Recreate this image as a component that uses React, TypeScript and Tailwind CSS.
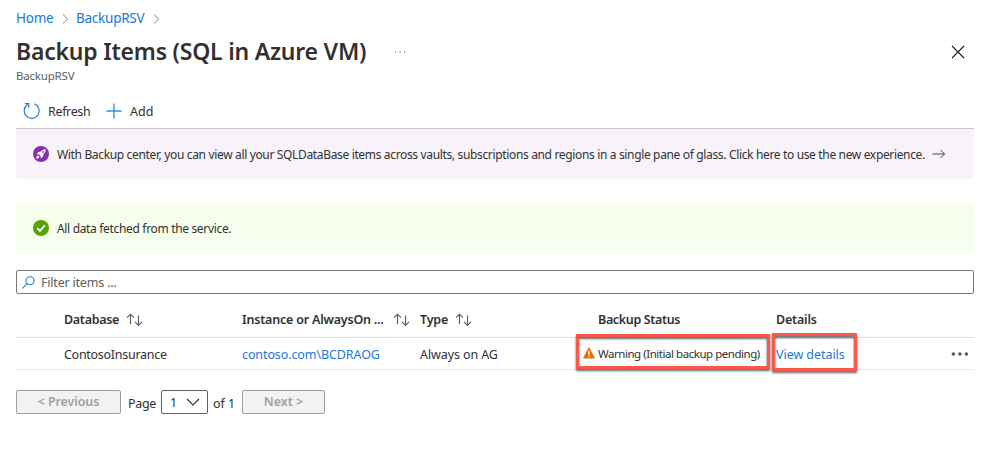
import React from "react";

function SortIcon() {
  return (
    <svg width="18" height="14" viewBox="0 0 18 14" fill="none" stroke="#5b5957" strokeWidth="1.1">
      <path d="M4.5 11V1.2M1 4.7L4.5 1.2L8 4.7" />
      <path d="M12.5 2.5V12.4M9 8.9L12.5 12.4L16 8.9" />
    </svg>
  );
}

function Chevron() {
  return (
    <svg className="mt-px" width="7" height="12" viewBox="0 0 7 12" fill="none" stroke="#8a8886" strokeWidth="1">
      <path d="M1 1.5L5.8 6L1 10.5" />
    </svg>
  );
}

function Toolbar() {
  return (
    <div className="flex h-[45px] items-center border-b border-[#c8c6c4] pt-[10px] text-[12.5px]">
      <svg className="-mt-px ml-[7px]" width="18" height="18" viewBox="0 0 18 18" fill="none" stroke="#2b7cd3" strokeWidth="1.2">
        <path d="M11.4 1.9A7.5 7.5 0 1 1 4.6 2.6M1.8 1.7H5.7V5.6" />
      </svg>
      <span className="ml-[7px] w-[58px] pt-[3px] tracking-[-0.35px]">Refresh</span>
      <svg className="-mt-px" width="16" height="16" viewBox="0 0 16 16" stroke="#2f8fdf" strokeWidth="1.3">
        <path d="M8 .5V15.5M.5 8H15.5" />
      </svg>
      <span className="ml-[8px] pt-[3px]">Add</span>
    </div>
  );
}

function PurpleBanner() {
  return (
    <div className="flex h-[50px] items-center rounded-b-sm bg-[#f8f3fb] pl-[17px] text-[12px]">
      <svg width="16" height="16" viewBox="0 0 16 16">
        <circle cx="8" cy="8" r="8" fill="#892db0" />
        <path fill="#fff" d="M12.6 3.2C10.5 3.1 9 4 7.8 5.6L5.4 5.9 3.5 8.2 5.8 8.3 7.7 10.2 7.8 12.5 10.1 10.6 10.4 8.2C12 6.8 12.8 5.3 12.6 3.2ZM5 9.4L3.3 11.1 3.5 12.7 5 12.5 6.6 11Z" />
        <circle cx="10" cy="6" r=".9" fill="#892db0" />
      </svg>
      <span className="ml-2 w-[875px] whitespace-nowrap pt-[2px] tracking-[-0.345px]">
        With Backup center, you can view all your SQLDataBase items across vaults, subscriptions and regions in a single pane of glass. Click here to use the new experience.
      </span>
      <svg width="14" height="10" viewBox="0 0 14 10" fill="none" stroke="#484644" strokeWidth="1">
        <path d="M.5 5H12.5M8.5 1L12.5 5L8.5 9" />
      </svg>
    </div>
  );
}

function GreenBanner() {
  return (
    <div className="mt-6 flex h-[50px] items-center bg-[#f6ffee] pl-[17px] text-[12px]">
      <svg width="16" height="16" viewBox="0 0 16 16">
        <circle cx="8" cy="8" r="8" fill="#57a300" />
        <path d="M4.2 8.2L7 11L11.8 5.2" fill="none" stroke="#fff" strokeWidth="1.8" />
      </svg>
      <span className="ml-2 pt-[2px] tracking-[-0.33px]">All data fetched from the service.</span>
    </div>
  );
}

function Table() {
  return (
    <div className="text-[12.5px]">
      <div className="flex h-[44px] items-center border-b border-[#e1dfdd] pl-12 pt-[9px] text-[12.5px] font-semibold">
        <div className="flex w-[178px] items-center">
          <span className="w-[62px] tracking-[-0.3px]">Database</span>
          <SortIcon />
        </div>
        <div className="flex w-[178px] items-center">
          <span className="w-[151px] whitespace-nowrap tracking-[-0.2px]">Instance or AlwaysOn ...</span>
          <SortIcon />
        </div>
        <div className="flex w-[178px] items-center">
          <span className="w-[35px] tracking-[-0.2px]">Type</span>
          <SortIcon />
        </div>
        <div className="w-[178px] tracking-[-0.35px]">Backup Status</div>
        <div className="tracking-[-0.2px]">Details</div>
      </div>
      <div className="relative flex h-[32px] items-center border-b border-[#edebe9] pl-12 pt-[2px]">
        <div className="w-[178px] pt-[2px] tracking-[-0.28px]">ContosoInsurance</div>
        <div className="w-[178px] pt-[2px] tracking-[-0.1px] text-[#2078d8]">contoso.com\BCDRAOG</div>
        <div className="w-[163px] pt-[2px] tracking-[-0.1px]">Always on AG</div>
        <div className="flex w-[193px] items-center text-[11.5px]">
          <svg className="-mt-[3px]" width="12" height="12" viewBox="0 0 12 12">
            <path d="M6 .8L11.4 11H.6Z" fill="#db7500" stroke="#db7500" strokeLinejoin="round" />
            <path d="M6 3.7V7.4M6 8.5V9.8" stroke="#fff" strokeWidth="1.3" />
          </svg>
          <span className="-mt-px ml-[3px] whitespace-nowrap tracking-[-0.46px]">Warning (Initial backup pending)</span>
        </div>
        <div className="w-[175px] pt-[2px] tracking-[-0.05px] text-[#2078d8]">View details</div>
        <svg className="-mt-[2px]" width="18" height="4" viewBox="0 0 18 4" fill="#5b5957">
          <circle cx="2.4" cy="2" r="1.8" />
          <circle cx="8.9" cy="2" r="1.8" />
          <circle cx="15.4" cy="2" r="1.8" />
        </svg>
        <div className="absolute left-[560px] top-[-4px] h-[35px] w-[194px] border-[3px] border-[#f9594a] drop-shadow-[0_2px_1px_rgba(60,60,60,0.8)]" />
        <div className="absolute left-[756px] top-[-5px] h-[38px] w-[85px] border-[3px] border-[#f9594a] drop-shadow-[0_2px_1px_rgba(60,60,60,0.8)]" />
      </div>
    </div>
  );
}

function Pager() {
  return (
    <div className="mt-[20px] flex h-6 items-center text-[12.5px]">
      <button className="h-6 w-[105px] rounded-xs border border-[#a19f9d] bg-[#f3f2f1] text-[12.5px] font-semibold leading-[22px] tracking-[-0.1px] text-[#a19f9d]">&lt; Previous</button>
      <span className="ml-[7px] w-[33px] pt-[4px] tracking-[-0.35px]">Page</span>
      <div className="flex h-6 w-[47px] items-center rounded-xs border border-[#605e5c] pl-[8px]">
        <span className="w-[16px] pt-[2px]">1</span>
        <svg width="14" height="8" viewBox="0 0 14 8" fill="none" stroke="#323130" strokeWidth="1.1">
          <path d="M1 1L7 7L13 1" />
        </svg>
      </div>
      <span className="ml-[5px] w-[29px] whitespace-nowrap pt-[4px]">of 1</span>
      <button className="h-6 w-[83px] rounded-xs border border-[#a19f9d] bg-[#f3f2f1] text-[12.5px] font-semibold leading-[22px] text-[#a19f9d]">Next &gt;</button>
    </div>
  );
}

export default function App() {
  return (
    <div className="h-[464px] w-[989px] overflow-hidden bg-white pl-4 pr-[15px] font-['Noto_Sans','Open_Sans',sans-serif] text-[#323130]">
      <div className="flex h-9 items-center text-[13.5px] tracking-[-0.25px] text-[#2078d8]">
        <span className="w-[46px] pt-px">Home</span>
        <Chevron />
        <span className="ml-[7px] w-[77px] pt-px">BackupRSV</span>
        <Chevron />
      </div>
      <div className="flex h-8 items-center">
        <h1 className="-mt-[2px] w-[379px] whitespace-nowrap text-[23px] font-semibold tracking-[-0.22px]">Backup Items (SQL in Azure VM)</h1>
        <svg width="11" height="2" viewBox="0 0 11 2" fill="#797775">
          <path d="M0 .3H1.2V1.5H0ZM4.4 .3H5.8V1.5H4.4ZM9 .3H10.2V1.5H9Z" />
        </svg>
        <svg className="ml-auto mr-[9px]" width="14" height="14" viewBox="0 0 14 14" stroke="#201f1e" strokeWidth="1.1">
          <path d="M1 1L13 13M13 1L1 13" />
        </svg>
      </div>
      <div className="h-4 text-[11.5px] leading-4 tracking-[-0.2px] text-[#605e5c]">BackupRSV</div>
      <Toolbar />
      <PurpleBanner />
      <GreenBanner />
      <div className="mt-[17px] flex h-6 items-center rounded-xs border border-[#7a7877] pl-[5px] text-[12.5px]">
        <svg width="13" height="13" viewBox="0 0 13 13" fill="none" stroke="#2b7cd3" strokeWidth="1.1">
          <circle cx="8" cy="4.8" r="4" />
          <path d="M5.1 7.7L.5 12.3" />
        </svg>
        <span className="ml-[6px] pt-[2px] tracking-[-0.2px] text-[#605e5c]">Filter items ...</span>
      </div>
      <Table />
      <Pager />
    </div>
  );
}
